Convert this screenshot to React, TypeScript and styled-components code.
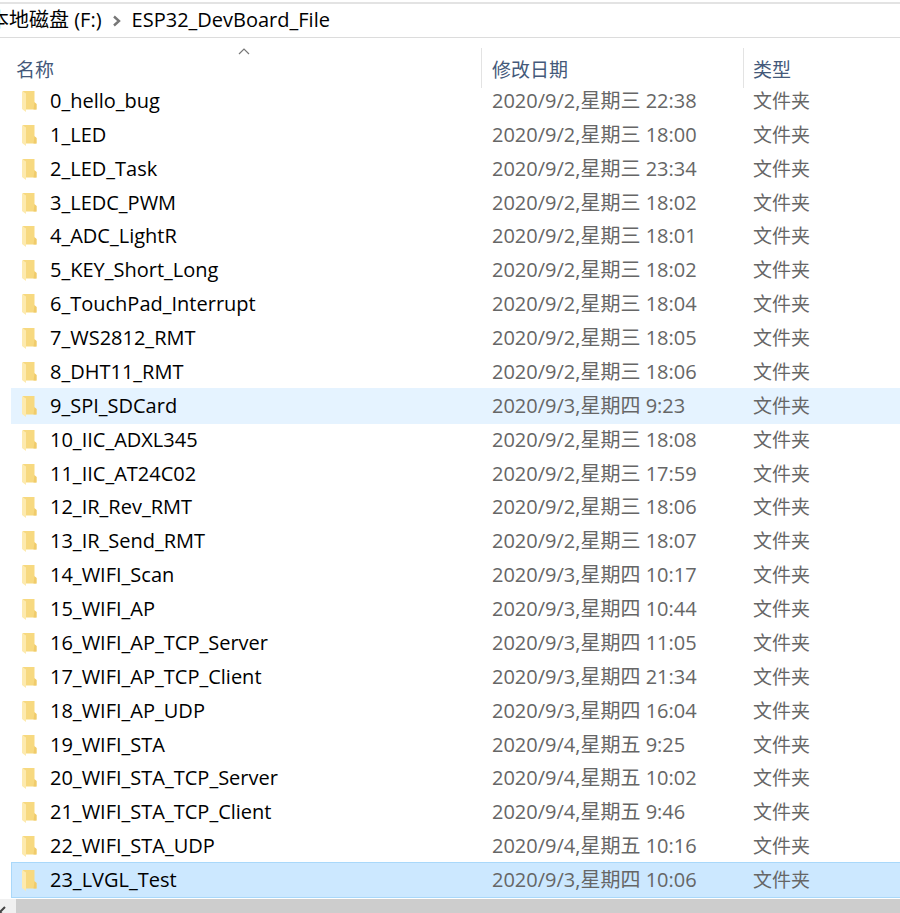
import React from "react";
import styled, { createGlobalStyle, css } from "styled-components";

const GlobalStyle = createGlobalStyle`
  * { box-sizing: border-box; }
  body {
    margin: 0;
    background: #fff;
    font-family: "Open Sans", "Noto Sans CJK SC", sans-serif;
    font-size: 20px;
    line-height: 24px;
    color: #000;
  }
`;

const Window = styled.div`
  display: flex;
  flex-direction: column;
  min-height: 100vh;
  overflow: hidden;
`;

const AddressBar = styled.nav`
  display: flex;
  align-items: center;
  height: 36px;
  margin-top: 2px;
  margin-left: -11px;
  padding-bottom: 2px;
  border-top: 2px solid #e3e3e3;
  border-bottom: 1px solid #dcdcdc;
  white-space: nowrap;
`;

const Crumb = styled.a`
  color: #000;
  text-decoration: none;
`;

const CrumbArrow = styled.svg`
  width: 10px;
  height: 14px;
  margin: 2px 10px 0;
  flex: none;
`;

const FileTable = styled.table`
  flex: 1;
  width: calc(100% - 12px);
  margin-left: 12px;
  table-layout: fixed;
  border-collapse: collapse;
  border-spacing: 0;
`;

const NameColumn = styled.col`
  width: 470px;
`;

const DateColumn = styled.col`
  width: 262px;
`;

const HeadRow = styled.tr`
  height: 46px;
`;

const HeadCell = styled.th<{ $divided?: boolean }>`
  position: relative;
  padding: 0;
  text-align: left;
  vertical-align: bottom;
  font-size: 19px;
  font-weight: 400;

  ${(p) =>
    p.$divided &&
    css`
      &::before {
        content: "";
        position: absolute;
        left: -1px;
        top: 10px;
        width: 1px;
        height: 40px;
        background: #e3e3e3;
      }
    `}
`;

const SortButton = styled.button<{ $indent: number }>`
  display: block;
  width: 100%;
  margin: 0;
  padding: 0 0 2px ${(p) => p.$indent}px;
  border: 0;
  background: none;
  color: #44597a;
  font: inherit;
  text-align: left;
`;

const SortMark = styled.svg`
  position: absolute;
  left: 50%;
  top: 10px;
  width: 12px;
  height: 7px;
  margin-left: -9px;
`;

const FileRow = styled.tr<{ $state?: "hover" | "selected" }>`
  height: 33px;
  ${(p) =>
    p.$state === "hover" &&
    css`
      background: #e5f3ff;
      box-shadow: 0 0 0 1px #e5f3ff;
    `}
  ${(p) =>
    p.$state === "selected" &&
    css`
      background: #cce8ff;
      box-shadow: 0 0 0 1px #a9d8fa;
    `}
`;

const Cell = styled.td`
  padding: 0 0 0 10px;
  color: #666;
  white-space: nowrap;
`;

const NameCell = styled(Cell)`
  color: #000;
`;

const TypeCell = styled(Cell)`
  padding-left: 9px;
  font-size: 19px;
`;

const NameLabel = styled.div`
  display: flex;
  align-items: center;
  gap: 12px;
`;

const FolderGlyph = styled.svg`
  width: 16px;
  height: 22px;
  flex: none;
`;

const ScrollBar = styled.div`
  display: flex;
  height: 14px;
  margin-top: 2px;
  overflow: hidden;
  background: #cdcdcd;
`;

const ScrollButton = styled.button`
  display: flex;
  width: 16px;
  height: 24px;
  padding: 6px 0 0;
  border: 0;
  background: #f0f0f0;
`;

const ScrollArrow = styled.svg`
  display: block;
  width: 6px;
  height: 12px;
`;

const files: [string, string][] = [
  ["0_hello_bug", "2020/9/2,星期三 22:38"],
  ["1_LED", "2020/9/2,星期三 18:00"],
  ["2_LED_Task", "2020/9/2,星期三 23:34"],
  ["3_LEDC_PWM", "2020/9/2,星期三 18:02"],
  ["4_ADC_LightR", "2020/9/2,星期三 18:01"],
  ["5_KEY_Short_Long", "2020/9/2,星期三 18:02"],
  ["6_TouchPad_Interrupt", "2020/9/2,星期三 18:04"],
  ["7_WS2812_RMT", "2020/9/2,星期三 18:05"],
  ["8_DHT11_RMT", "2020/9/2,星期三 18:06"],
  ["9_SPI_SDCard", "2020/9/3,星期四 9:23"],
  ["10_IIC_ADXL345", "2020/9/2,星期三 18:08"],
  ["11_IIC_AT24C02", "2020/9/2,星期三 17:59"],
  ["12_IR_Rev_RMT", "2020/9/2,星期三 18:06"],
  ["13_IR_Send_RMT", "2020/9/2,星期三 18:07"],
  ["14_WIFI_Scan", "2020/9/3,星期四 10:17"],
  ["15_WIFI_AP", "2020/9/3,星期四 10:44"],
  ["16_WIFI_AP_TCP_Server", "2020/9/3,星期四 11:05"],
  ["17_WIFI_AP_TCP_Client", "2020/9/3,星期四 21:34"],
  ["18_WIFI_AP_UDP", "2020/9/3,星期四 16:04"],
  ["19_WIFI_STA", "2020/9/4,星期五 9:25"],
  ["20_WIFI_STA_TCP_Server", "2020/9/4,星期五 10:02"],
  ["21_WIFI_STA_TCP_Client", "2020/9/4,星期五 9:46"],
  ["22_WIFI_STA_UDP", "2020/9/4,星期五 10:16"],
  ["23_LVGL_Test", "2020/9/3,星期四 10:06"],
];

const rowStates: Record<string, "hover" | "selected"> = {
  "9_SPI_SDCard": "hover",
  "23_LVGL_Test": "selected",
};

function FolderIcon() {
  return (
    <FolderGlyph viewBox="0 0 16 22" aria-hidden="true">
      <path d="M1 1H12.500V12L14.500 14V19.500H4Z" fill="#f7d980" />
      <path d="M12.500 12.500L14.500 14V19.500H11.500Z" fill="#f0cb6c" />
      <path d="M0 1L4 3.500V22L0 19Z" fill="#fdeaae" />
    </FolderGlyph>
  );
}

export default function App() {
  return (
    <Window>
      <GlobalStyle />
      <AddressBar aria-label="路径">
        <Crumb href="#drive">本地磁盘 (F:)</Crumb>
        <CrumbArrow viewBox="0 0 10 14" aria-hidden="true">
          <path d="M2 2.500L7 7L2 11.500" fill="none" stroke="#777" strokeWidth="2.400" />
        </CrumbArrow>
        <Crumb href="#folder">ESP32_DevBoard_File</Crumb>
      </AddressBar>
      <FileTable>
        <colgroup>
          <NameColumn />
          <DateColumn />
          <col />
        </colgroup>
        <thead>
          <HeadRow>
            <HeadCell aria-sort="ascending">
              <SortMark viewBox="0 0 12 7" aria-hidden="true">
                <path d="M1 6L6 1L11 6" fill="none" stroke="#777" strokeWidth="1.200" />
              </SortMark>
              <SortButton type="button" $indent={4}>名称</SortButton>
            </HeadCell>
            <HeadCell $divided>
              <SortButton type="button" $indent={10}>修改日期</SortButton>
            </HeadCell>
            <HeadCell $divided>
              <SortButton type="button" $indent={9}>类型</SortButton>
            </HeadCell>
          </HeadRow>
        </thead>
        <tbody>
          {files.map(([name, date]) => (
            <FileRow key={name} $state={rowStates[name]} aria-selected={rowStates[name] === "selected"}>
              <NameCell>
                <NameLabel>
                  <FolderIcon />
                  {name}
                </NameLabel>
              </NameCell>
              <Cell>{date}</Cell>
              <TypeCell>文件夹</TypeCell>
            </FileRow>
          ))}
        </tbody>
      </FileTable>
      <ScrollBar>
        <ScrollButton type="button" aria-label="向左滚动">
          <ScrollArrow viewBox="0 0 6 12" aria-hidden="true">
            <path d="M5 2L0 7L5 12" fill="none" stroke="#444" strokeWidth="2" />
          </ScrollArrow>
        </ScrollButton>
      </ScrollBar>
    </Window>
  );
}
